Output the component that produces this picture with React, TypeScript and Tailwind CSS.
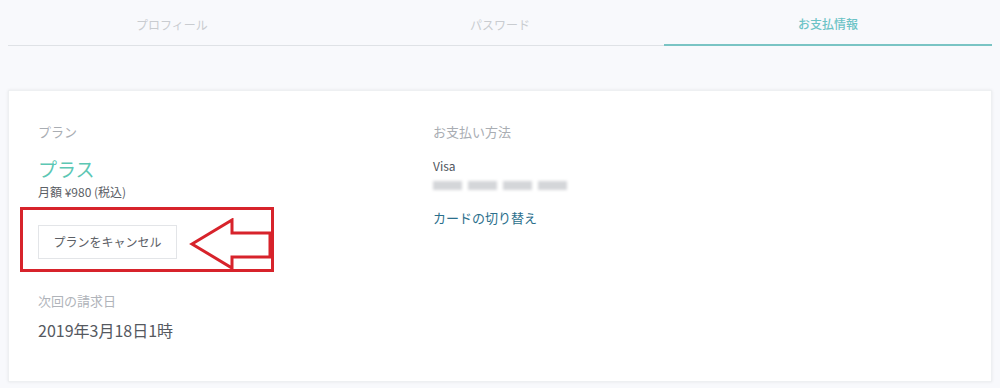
import React from "react";

const tabs = ["プロフィール", "パスワード", "お支払情報"];

const CardNumberBlur = () => (
    <div className="flex gap-[6px] mt-[4px] h-[12px] items-center">
        {[0, 1, 2, 3].map((i) => (
            <div key={i} className="w-[29px] h-[9px] bg-[#d4d6d9] blur-[1.5px]" />
        ))}
    </div>
);

export default function App() {
    return (
        <div
            className="w-[1000px] h-[388px] bg-[#f8f9fc] px-2 overflow-hidden"
            style={{ fontFamily: '"Noto Sans CJK JP", "Noto Sans", sans-serif' }}
        >
            {/* Tabs */}
            <div className="grid grid-cols-3 border-b border-[#dfe2e6] h-[46px]">
                {tabs.map((t, i) => (
                    <div
                        key={t}
                        className={`flex items-center justify-center text-[12px] pt-[4px] ${
                            i === 2
                                ? "text-[#6cc3c6] font-medium border-b-2 border-[#7ac4c4] -mb-px"
                                : "text-[#c9ccd0]"
                        }`}
                    >
                        {t}
                    </div>
                ))}
            </div>

            {/* Card */}
            <div className="relative mt-[44px] bg-white h-[292px] shadow-[0_0_3px_rgba(0,0,0,0.08)] border border-[#eef0f2] pl-[29px] pt-[31px] flex">
                <div className="w-[395px]">
                    <div className="text-[13px] text-[#a9adb3] leading-[20px]">プラン</div>
                    <div className="text-[19px] text-[#5cc7b4] leading-[26px] mt-[14px]">プラス</div>
                    <div className="text-[12px] text-[#5c6066] leading-[18px] mt-[1px]">月額 ¥980 (税込)</div>
                    <button
                        type="button"
                        className="mt-[24px] w-[139px] h-[34px] border border-[#e3e5e8] bg-white text-[12px] text-[#5c6066] flex items-center justify-center"
                    >
                        プランをキャンセル
                    </button>
                    <div className="text-[13px] text-[#b0b4ba] leading-[20px] mt-[32px]">次回の請求日</div>
                    <div className="text-[16px] text-[#55595f] leading-[24px] mt-[7px]">2019年3月18日1時</div>
                </div>
                <div>
                    <div className="text-[13px] text-[#a9adb3] leading-[20px]">お支払い方法</div>
                    <div className="text-[12px] text-[#4f555c] leading-[18px] mt-[15px]">Visa</div>
                    <CardNumberBlur />
                    <div className="text-[13px] text-[#2b6f8c] leading-[20px] mt-[17px]">カードの切り替え</div>
                </div>

                {/* Annotation overlay */}
                <div className="absolute left-[11px] top-[116px] w-[254px] h-[65px] border-[3px] border-[#d7232b]" />
                <svg className="absolute left-[180px] top-[127px]" width="96" height="54" viewBox="0 0 96 54">
                    <polygon
                        points="3,26 43,2 43,15 81,15 81,39 43,39 43,50"
                        fill="white"
                        stroke="#d7232b"
                        strokeWidth="3"
                        strokeLinejoin="miter"
                    />
                </svg>
            </div>
        </div>
    );
}
